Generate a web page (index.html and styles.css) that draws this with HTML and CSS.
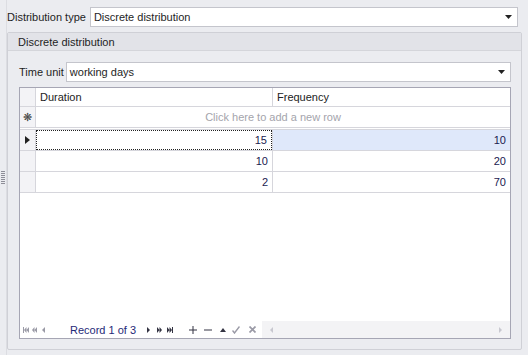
FILE: index.html
```html
<!DOCTYPE html>
<html lang="en">
<head>
  <meta charset="UTF-8" />
  <title>Distribution</title>
  <link rel="stylesheet" href="styles.css">
</head>
<body>
  <div class="splitter"><span class="grip"></span></div>
  <div class="panel">
    <div class="field top-field">
      <label>Distribution type</label>
      <div class="combo">
        <span>Discrete distribution</span>
        <svg class="drop" width="7" height="4" viewBox="0 0 7 4"><path d="M0 0h7L3.5 4z" fill="#222"/></svg>
      </div>
    </div>

    <div class="group">
      <div class="group-header">Discrete distribution</div>
      <div class="group-body">
        <div class="field unit-field">
          <label>Time unit</label>
          <div class="combo">
            <span>working days</span>
            <svg class="drop" width="7" height="4" viewBox="0 0 7 4"><path d="M0 0h7L3.5 4z" fill="#222"/></svg>
          </div>
        </div>

        <div class="grid">
          <div class="row header">
            <div class="ind"></div>
            <div class="cell col1">Duration</div>
            <div class="cell">Frequency</div>
          </div>
          <div class="row new-row">
            <div class="ind star">&#x274B;</div>
            <div class="cell new-text">Click here to add a new row</div>
          </div>
          <div class="row data">
            <div class="ind">
              <svg width="5" height="8" viewBox="0 0 5 8"><path d="M0 0l5 4-5 4z" fill="#222"/></svg>
            </div>
            <div class="cell col1 num focus">15</div>
            <div class="cell num selected">10</div>
          </div>
          <div class="row data">
            <div class="ind"></div>
            <div class="cell col1 num">10</div>
            <div class="cell num">20</div>
          </div>
          <div class="row data">
            <div class="ind"></div>
            <div class="cell col1 num">2</div>
            <div class="cell num">70</div>
          </div>
          <div class="grid-fill"></div>

          <div class="navigator">
            <div class="nav-buttons">
              <svg class="nb-first" width="6" height="6" viewBox="0 0 6 6"><path d="M0 0h1v6H0zM3.5 0v6L1 3zM6 0v6L3.5 3z" fill="#9a9aa6"/></svg>
              <svg class="nb-prevpage" width="5" height="6" viewBox="0 0 5 6"><path d="M2.5 0v6L0 3zM5 0v6L2.5 3z" fill="#9a9aa6"/></svg>
              <svg class="nb-prev" width="3" height="6" viewBox="0 0 3 6"><path d="M3 0v6L0 3z" fill="#9a9aa6"/></svg>
              <span class="record">Record 1 of 3</span>
              <svg class="nb-next" width="3" height="6" viewBox="0 0 3 6"><path d="M0 0v6l3-3z" fill="#333342"/></svg>
              <svg class="nb-nextpage" width="5" height="6" viewBox="0 0 5 6"><path d="M0 0v6l2.5-3zM2.5 0v6L5 3z" fill="#333342"/></svg>
              <svg class="nb-last" width="6" height="6" viewBox="0 0 6 6"><path d="M0 0v6l2.5-3zM2.5 0v6L5 3zM5 0h1v6H5z" fill="#333342"/></svg>
              <svg class="nb-add" width="8" height="8" viewBox="0 0 8 8"><path d="M3.5 0h1v8h-1zM0 3.5h8v1H0z" fill="#333342"/></svg>
              <svg class="nb-remove" width="8" height="8" viewBox="0 0 8 8"><path d="M0 3.5h8v1H0z" fill="#333342"/></svg>
              <svg class="nb-up" width="6" height="4" viewBox="0 0 6 4"><path d="M3 0l3 4H0z" fill="#333342"/></svg>
              <svg class="nb-ok" width="8" height="8" viewBox="0 0 8 8"><path d="M0.5 4.5l2 2.5L7.5 0.5" stroke="#9a9aa6" stroke-width="1.4" fill="none"/></svg>
              <svg class="nb-cancel" width="7" height="7" viewBox="0 0 7 7"><path d="M0.5 0.5l6 6M6.5 0.5l-6 6" stroke="#9a9aa6" stroke-width="1.7"/></svg>
            </div>
            <div class="hscroll">
              <svg width="3" height="6" viewBox="0 0 3 6"><path d="M3 0v6L0 3z" fill="#c8c8d0"/></svg>
              <svg width="3" height="6" viewBox="0 0 3 6"><path d="M0 0v6l3-3z" fill="#c8c8d0"/></svg>
            </div>
          </div>
        </div>
      </div>
    </div>
  </div>
</body>
</html>
```

FILE: styles.css
```css
* {
  margin: 0;
  padding: 0;
  box-sizing: border-box;
}

html, body {
  height: 100%;
}

body {
  display: flex;
  background: #ebecf0;
  font-family: "Liberation Sans", Arial, sans-serif;
  font-size: 11px;
  color: #1e1e1e;
}

.splitter {
  width: 7px;
  display: flex;
  align-items: center;
  justify-content: center;
  border-right: 1px solid #dcdde2;
}

.grip {
  width: 4px;
  height: 13px;
  margin-left: -1px;
  background: repeating-linear-gradient(#8e8e98 0 1px, transparent 1px 2px);
}

.panel {
  flex: 1;
  display: flex;
  flex-direction: column;
  padding: 7px 6px 5px 0;
}

.field {
  display: flex;
  align-items: center;
  gap: 4px;
}

.top-field {
  padding-right: 4px;
}

.unit-field {
  gap: 2px;
}

.field label {
  white-space: nowrap;
}

.combo {
  flex: 1;
  height: 20px;
  background: #fff;
  border: 1px solid #c4c5cc;
  display: flex;
  align-items: center;
  justify-content: space-between;
  padding: 0 5px 0 3px;
}

.group {
  flex: 1;
  margin-top: 5px;
  border: 1px solid #cfd0d6;
  border-radius: 2px;
  display: flex;
  flex-direction: column;
}

.group-header {
  height: 18px;
  background: #e2e3e8;
  border-bottom: 1px solid #d4d5da;
  padding-left: 10px;
  display: flex;
  align-items: center;
}

.group-body {
  flex: 1;
  display: flex;
  flex-direction: column;
  padding: 11px 10px 10px 11px;
}

.grid {
  flex: 1;
  margin-top: 5px;
  border: 1px solid #a6a6b4;
  background: #fff;
  display: flex;
  flex-direction: column;
}

.row {
  display: flex;
  height: 21px;
  border-bottom: 1px solid #d6d6dc;
}

.header {
  height: 19px;
}

.ind {
  width: 16px;
  flex: none;
  background: #f3f3f6;
  border-right: 1px solid #d6d6dc;
  display: flex;
  align-items: center;
  justify-content: center;
}

.cell {
  flex: 1;
  display: flex;
  align-items: center;
  padding: 0 4px;
  color: #1a1a50;
}

.col1 {
  flex: none;
  width: 236px;
}

.header .cell {
  color: #222;
}

.header .cell + .cell,
.data .cell + .cell {
  border-left: 1px solid #d6d6dc;
}

.new-row {
  height: 23px;
  border-bottom: 3px double #d6d6dc;
}

.star {
  font-size: 11px;
  color: #444;
}

.new-text {
  justify-content: center;
  color: #a4a4ac;
}

.num {
  justify-content: flex-end;
}

.focus {
  border: 1px dotted #222;
}

.selected {
  background: #dfe8fa;
}

.grid-fill {
  flex: 1;
}

.navigator {
  height: 17px;
  display: flex;
  align-items: center;
}

.nav-buttons {
  display: flex;
  align-items: center;
  width: 242px;
}

.nb-first { margin-left: 3px; }
.nb-prevpage { margin-left: 3px; }
.nb-prev { margin-left: 5px; }
.nb-next { margin-left: 11px; }
.nb-nextpage { margin-left: 7px; }
.nb-last { margin-left: 5px; }
.nb-add { margin-left: 16px; }
.nb-remove { margin-left: 7px; }
.nb-up { margin-left: 8px; }
.nb-ok { margin-left: 6px; }
.nb-cancel { margin-left: 9px; }

.record {
  color: #1f2a78;
  font-size: 11px;
  margin-left: 25px;
}

.hscroll {
  flex: 1;
  height: 100%;
  background: #f3f3f5;
  display: flex;
  align-items: center;
  justify-content: space-between;
  padding: 0 8px;
}
```
